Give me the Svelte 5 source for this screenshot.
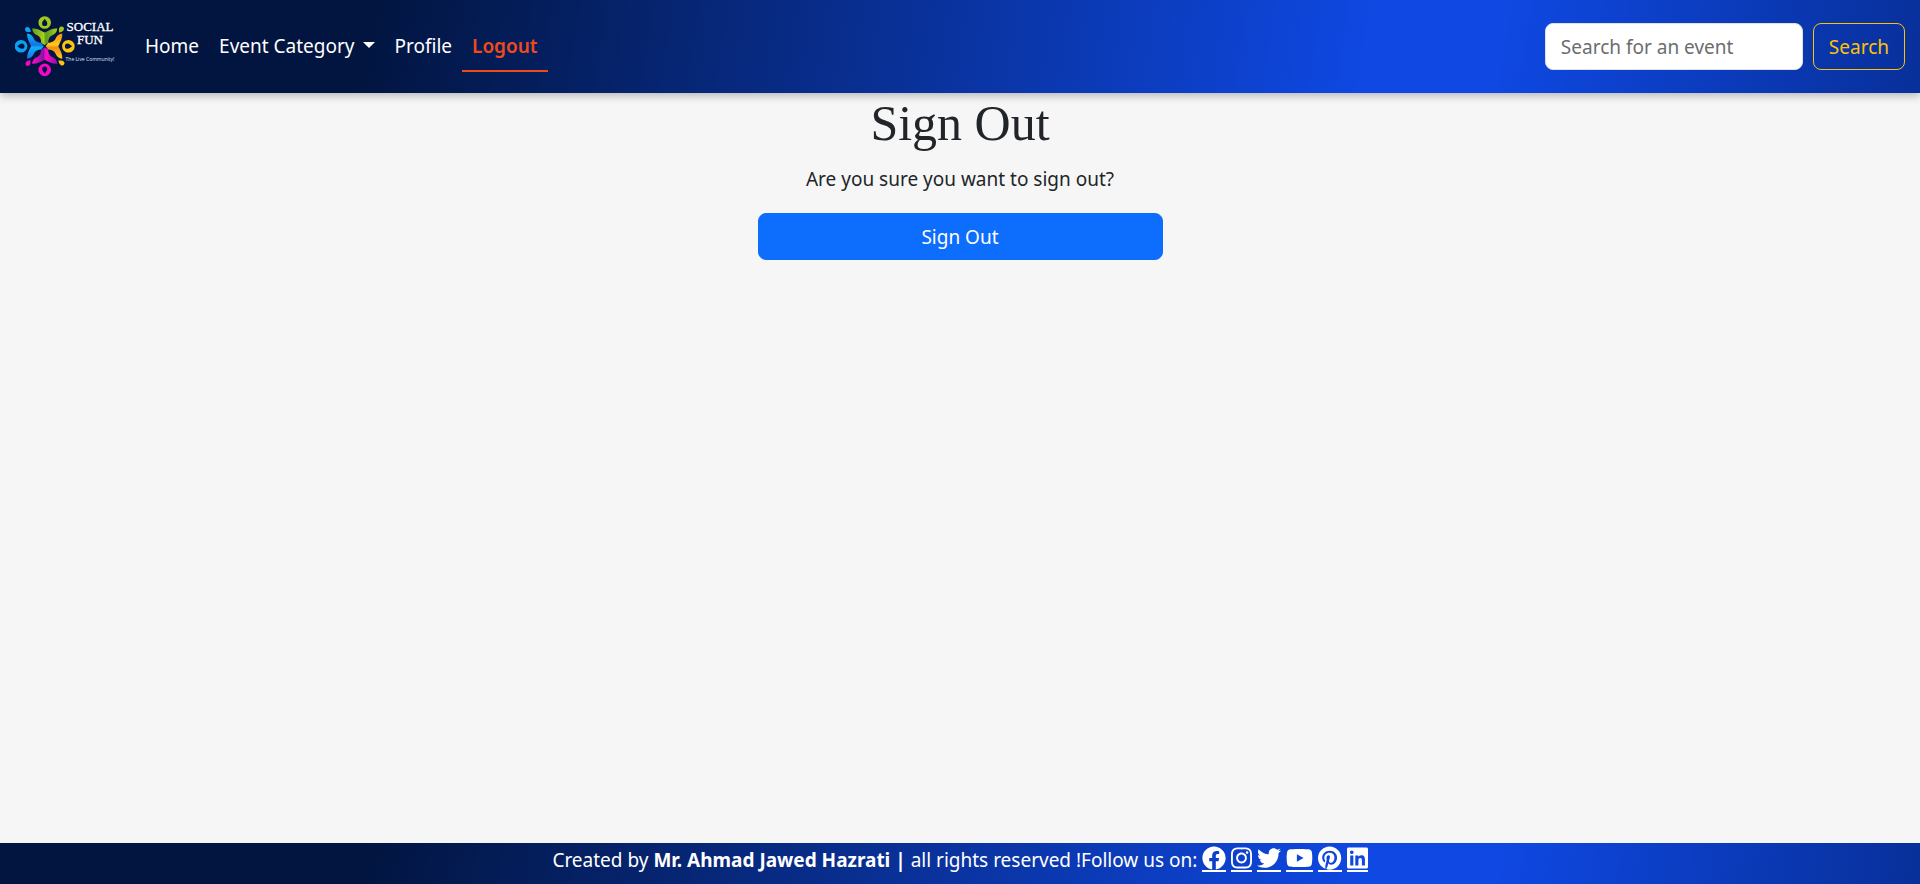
<script>
  let query = $state('');

  const socials = [
    { name: 'Facebook', w: 512, d: 'M504 256C504 119 393 8 256 8S8 119 8 256c0 123.78 90.69 226.38 209.25 245V327.69h-63V256h63v-54.64c0-62.15 37-96.48 93.67-96.48 27.14 0 55.52 4.84 55.52 4.84v61h-31.28c-30.8 0-40.41 19.12-40.41 38.73V256h68.78l-11 71.69h-57.78V501C413.31 482.38 504 379.78 504 256z' },
    { name: 'Instagram', w: 448, d: 'M224.1 141c-63.6 0-114.9 51.3-114.9 114.9s51.3 114.9 114.9 114.9S339 319.5 339 255.9 287.7 141 224.1 141zm0 189.6c-41.1 0-74.7-33.5-74.7-74.7s33.5-74.7 74.7-74.7 74.7 33.5 74.7 74.7-33.6 74.7-74.7 74.7zm146.4-194.3c0 14.9-12 26.8-26.8 26.8-14.9 0-26.8-12-26.8-26.8s12-26.8 26.8-26.8 26.8 12 26.8 26.8zm76.1 27.2c-1.7-35.9-9.9-67.7-36.2-93.9-26.2-26.2-58-34.4-93.9-36.2-37-2.1-147.9-2.1-184.9 0-35.8 1.7-67.6 9.9-93.9 36.1s-34.4 58-36.2 93.9c-2.1 37-2.1 147.9 0 184.9 1.7 35.9 9.9 67.7 36.2 93.9s58 34.4 93.9 36.2c37 2.1 147.9 2.1 184.9 0 35.9-1.7 67.7-9.9 93.9-36.2 26.2-26.2 34.4-58 36.2-93.9 2.1-37 2.1-147.8 0-184.8zM398.8 388c-7.8 19.6-22.9 34.7-42.6 42.6-29.5 11.7-99.5 9-132.1 9s-102.7 2.6-132.1-9c-19.6-7.8-34.7-22.9-42.6-42.6-11.7-29.5-9-99.5-9-132.1s-2.6-102.7 9-132.1c7.8-19.6 22.9-34.7 42.6-42.6 29.5-11.7 99.5-9 132.1-9s102.7-2.6 132.1 9c19.6 7.8 34.7 22.9 42.6 42.6 11.7 29.5 9 99.5 9 132.1s2.7 102.7-9 132.1z' },
    { name: 'Twitter', w: 512, d: 'M459.37 151.716c.325 4.548.325 9.097.325 13.645 0 138.72-105.583 298.558-298.558 298.558-59.452 0-114.68-17.219-161.137-47.106 8.447.974 16.568 1.299 25.34 1.299 49.055 0 94.213-16.568 130.274-44.832-46.132-.975-84.792-31.188-98.112-72.772 6.498.974 12.995 1.624 19.818 1.624 9.421 0 18.843-1.3 27.614-3.573-48.081-9.747-84.143-51.98-84.143-102.985v-1.299c13.969 7.797 30.214 12.67 47.431 13.319-28.264-18.843-46.781-51.005-46.781-87.391 0-19.492 5.197-37.36 14.294-52.954 51.655 63.675 129.3 105.258 216.365 109.807-1.624-7.797-2.599-15.918-2.599-24.04 0-57.828 46.782-104.934 104.934-104.934 30.213 0 57.502 12.67 76.67 33.137 23.715-4.548 46.456-13.32 66.599-25.34-7.798 24.366-24.366 44.833-46.132 57.827 21.117-2.273 41.584-8.122 60.426-16.243-14.292 20.791-32.161 39.308-52.628 54.253z' },
    { name: 'YouTube', w: 576, d: 'M549.655 124.083c-6.281-23.65-24.787-42.276-48.284-48.597C458.781 64 288 64 288 64S117.22 64 74.629 75.486c-23.497 6.322-42.003 24.947-48.284 48.597-11.412 42.867-11.412 132.305-11.412 132.305s0 89.438 11.412 132.305c6.281 23.65 24.787 41.5 48.284 47.821C117.22 448 288 448 288 448s170.78 0 213.371-11.486c23.497-6.321 42.003-24.171 48.284-47.821 11.412-42.867 11.412-132.305 11.412-132.305s0-89.438-11.412-132.305zm-317.51 213.508V175.185l142.739 81.205-142.739 81.201z' },
    { name: 'Pinterest', w: 496, d: 'M496 256c0 137-111 248-248 248-25.6 0-50.2-3.9-73.4-11.1 10.1-16.5 25.2-43.5 30.8-65 3-11.6 15.4-59 15.4-59 8.1 15.4 31.7 28.5 56.8 28.5 74.8 0 128.7-68.8 128.7-154.3 0-81.9-66.9-143.2-152.9-143.2-107 0-163.9 71.8-163.9 150.1 0 36.4 19.4 81.7 50.3 96.1 4.7 2.2 7.2 1.2 8.3-3.3.8-3.4 5-20.3 6.9-28.1.6-2.5.3-4.7-1.7-7.1-10.1-12.5-18.3-35.3-18.3-56.6 0-54.7 41.4-107.6 112-107.6 60.9 0 103.6 41.5 103.6 100.9 0 67.1-33.9 113.6-78 113.6-24.3 0-42.6-20.1-36.7-44.8 7-29.5 20.5-61.3 20.5-82.6 0-19-10.2-34.9-31.4-34.9-24.9 0-44.9 25.7-44.9 60.2 0 22 7.4 36.8 7.4 36.8s-24.5 103.8-29 123.2c-5 21.4-3 51.6-.9 71.2C65.4 450.9 0 361.1 0 256 0 119 111 8 248 8s248 111 248 248z' },
    { name: 'LinkedIn', w: 448, d: 'M416 32H31.9C14.3 32 0 46.5 0 64.3v383.4C0 465.5 14.3 480 31.9 480H416c17.6 0 32-14.5 32-32.3V64.3c0-17.8-14.4-32.3-32-32.3zM135.4 416H69V202.2h66.5V416zm-33.2-243c-21.3 0-38.5-17.3-38.5-38.5S80.9 96 102.2 96c21.2 0 38.5 17.3 38.5 38.5 0 21.3-17.2 38.5-38.5 38.5zm282.1 243h-66.4V312c0-24.8-.5-56.7-34.5-56.7-34.6 0-39.9 27-39.9 54.9V416h-66.4V202.2h63.7v29.2h.9c8.9-16.8 30.6-34.5 62.2-34.5 66.5 0 78.8 43.8 78.8 100.9V416z' }
  ];

  const people = [
    { turn: 0, ring: '#a2c71c', light: '#a8cf1e', dark: '#5f9a1c' },
    { turn: 90, ring: '#fcc40f', light: '#ffce12', dark: '#f58a1f' },
    { turn: 180, ring: '#f505c4', light: '#ff0ccb', dark: '#8d12a5' },
    { turn: 270, ring: '#0aa2f5', light: '#06b4fb', dark: '#1a6fe6' }
  ];
</script>

<div class="page">
  <header class="bar navbar">
    <a class="brand" href="#home" aria-label="Social Fun">
      <svg width="102" height="63" viewBox="0 0 102 63" aria-hidden="true">
        <defs>
          {#each people as p, i}
            <linearGradient id="body{i}" x1="0" x2="1" y1="0" y2="0">
              <stop offset="0" stop-color={p.dark} />
              <stop offset="0.45" stop-color={p.light} />
              <stop offset="0.55" stop-color={p.dark} />
              <stop offset="1" stop-color={p.light} />
            </linearGradient>
          {/each}
        </defs>
        {#each people as p, i}
          <g transform="translate(29.7 31.2) rotate({p.turn})">
            <path fill={p.ring} fill-rule="evenodd" d="M0-30a6.3 6.3 0 1 1 0 12.6A6.3 6.3 0 0 1 0-30zM0-27.4C-1-25.8-2.6-24.6-2.6-22.8a2.6 2.6 0 0 0 5.2 0C2.6-24.6 1-25.8 0-27.4z" />
            <path fill="url(#body{i})" d="M-12.6-17.6C-8-18-4-15.600 0-13.600C4-15.600 8-18 12.600-17.600C12.400-14 10-11.800 7-10.600C4.400-9.200 3.800-6.800 3.400-3.500L0-1L-3.400-3.500C-3.800-6.800-4.400-9.200-7-10.600C-10-11.800-12.400-14-12.600-17.600z" />
            <path fill={p.ring} d="M14.400-13.700C14-16.400 14-18.800 16-19.600C18.300-20.300 20-18.400 19-16.300C18-14.600 16.500-14.200 14.400-13.700z" />
          </g>
        {/each}
        <text class="wordmark" x="75" y="16">SOCIAL</text>
        <text class="wordmark" x="75" y="29">FUN</text>
        <text class="tagline" x="75" y="46">The Live Community!</text>
      </svg>
    </a>

    <nav class="links" aria-label="Main">
      <a href="#home">Home</a>
      <a class="toggle" href="#category" aria-haspopup="true">Event Category</a>
      <a href="#profile">Profile</a>
      <a class="active" href="#logout" aria-current="page">Logout</a>
    </nav>

    <form class="search" role="search" onsubmit={(e) => e.preventDefault()}>
      <input type="search" placeholder="Search for an event" aria-label="Search for an event" bind:value={query} />
      <button type="submit">Search</button>
    </form>
  </header>

  <main>
    <h1>Sign Out</h1>
    <p>Are you sure you want to sign out?</p>
    <form onsubmit={(e) => e.preventDefault()}>
      <button class="primary" type="submit">Sign Out</button>
    </form>
  </main>

  <footer class="bar">
    <span>Created by <strong>Mr. Ahmad Jawed Hazrati |</strong> all rights reserved !Follow us on:</span>
    <span class="socials">
      {#each socials as s}
        <a href="#{s.name.toLowerCase()}" aria-label={s.name}>
          <svg height="24" viewBox="0 0 {s.w} 512" aria-hidden="true"><path fill="currentColor" d={s.d} /></svg>
        </a>
      {/each}
    </span>
  </footer>
</div>

<style>
  :global(body) {
    margin: 0;
    background: #f6f6f6;
  }

  .page {
    display: flex;
    flex-direction: column;
    min-height: 100vh;
    color: #212529;
    font: 19px/30px 'Segoe UI', 'Noto Sans', 'Open Sans', sans-serif;
  }

  .page :global(*) {
    box-sizing: border-box;
  }

  .bar {
    color: #fff;
    background: linear-gradient(99deg, #021540 19%, #0f48e2 71%, #0f48e2 78%, #08309a 100%);
  }

  .navbar {
    display: flex;
    align-items: center;
    padding: 15px;
    box-shadow: 0 3px 8px rgba(0, 0, 0, 0.25);
  }

  .brand {
    display: flex;
    margin-right: 18px;
  }

  .wordmark {
    fill: #fff;
    font: 13px 'Liberation Serif', serif;
    stroke: #fff;
    stroke-width: 0.3px;
    text-anchor: middle;
  }

  .tagline {
    fill: #dde3f0;
    font: 5px 'Open Sans', sans-serif;
    text-anchor: middle;
  }

  .links {
    display: flex;
    flex: 1;
  }

  .links a {
    padding: 10px 10px 9px;
    border-bottom: 2px solid transparent;
    color: #fff;
    text-decoration: none;
  }

  .toggle::after {
    content: '';
    display: inline-block;
    margin-left: 8px;
    vertical-align: 5px;
    border: 6px solid transparent;
    border-top-color: #fff;
    border-bottom: 0;
  }

  .links .active {
    border-bottom-color: #f04a1a;
    color: #f04a1a;
    font-weight: 600;
  }

  .search {
    display: flex;
    gap: 10px;
  }

  input,
  button {
    height: 47px;
    padding: 7px 15px;
    border: 1px solid #dee2e6;
    border-radius: 8px;
    font: inherit;
  }

  input {
    width: 258px;
    background: #fff;
    color: #212529;
    appearance: none;
  }

  input::placeholder {
    color: #6a6d70;
    opacity: 1;
  }

  .search button {
    border-color: #ffc107;
    background: transparent;
    color: #ffc107;
  }

  main {
    flex: 1;
    padding: 0 15px;
    text-align: center;
  }

  h1 {
    margin: 0 0 11px;
    font: 50px/60px 'Liberation Serif', serif;
  }

  p {
    margin: 0 0 19px;
  }

  .primary {
    width: 100%;
    max-width: 405px;
    border-color: #0d6efd;
    background: #0d6efd;
    color: #fff;
  }

  footer {
    display: flex;
    justify-content: center;
    gap: 5px;
    padding: 2px 15px 9px;
  }

  .socials {
    display: flex;
    gap: 5px;
  }

  .socials a {
    display: flex;
    align-self: flex-start;
    margin-top: 1px;
    border-bottom: 2px solid #fff;
    color: #fff;
  }
</style>
